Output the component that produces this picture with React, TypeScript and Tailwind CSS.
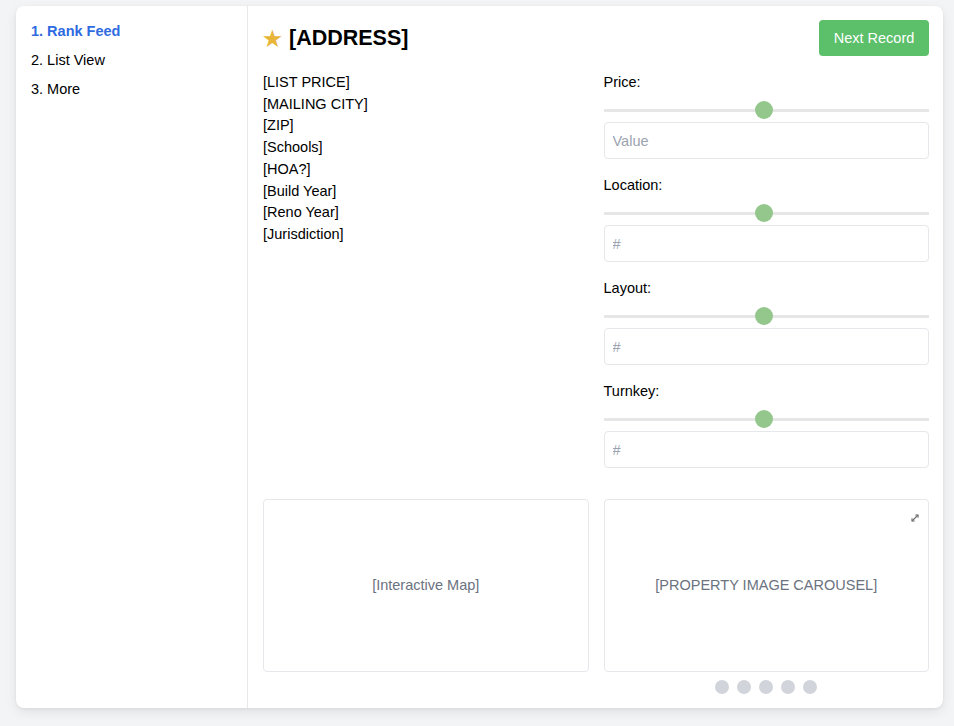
import { useState } from "react";

const FIELDS = ["[LIST PRICE]", "[MAILING CITY]", "[ZIP]", "[Schools]", "[HOA?]", "[Build Year]", "[Reno Year]", "[Jurisdiction]"];

const SCORES = [
  { label: "Price:", placeholder: "Value" },
  { label: "Location:", placeholder: "#" },
  { label: "Layout:", placeholder: "#" },
  { label: "Turnkey:", placeholder: "#" },
];

const NAV = ["1. Rank Feed", "2. List View", "3. More"];

export default function App() {
  const [active] = useState(0);

  return (
    <div
      className="min-h-screen bg-[#f3f4f6] pt-[6px] pb-[18px] pl-4 pr-[11px] text-[14.5px] text-black"
      style={{ fontFamily: '"Liberation Sans", Arial, sans-serif' }}
    >
      <div className="flex h-[702px] rounded-lg bg-white shadow-[0_4px_12px_rgba(0,0,0,0.08),0_1px_3px_rgba(0,0,0,0.06)]">
        {/* 侧边导航 */}
        <aside className="w-[232px] shrink-0 border-r border-[#e8e8e8] pl-[15px] pt-[10px]">
          <ul>
            {NAV.map((n, i) => (
              <li
                key={n}
                className={
                  i === active
                    ? "py-[4.5px] leading-5 font-bold text-[#2f6be0]"
                    : "py-[4.5px] leading-5"
                }
              >
                {n}
              </li>
            ))}
          </ul>
        </aside>

        <main className="flex-1 pl-[15px] pr-[14px] pt-[14px]">
          {/* 标题 + 按钮 */}
          <div className="flex h-9 items-center justify-between">
            <h1 className="flex items-center gap-[7px] pt-px text-[21.5px] font-bold">
              <span className="text-[21px] leading-none text-[#e8b43a]">★</span>
              [ADDRESS]
            </h1>
            <button className="h-9 w-[110px] rounded bg-[#5cbf6a] pt-px text-white">Next Record</button>
          </div>

          <div className="mt-[14px] grid grid-cols-2 gap-[15px]">
            <ul className="pt-[2px] leading-[21.7px]">
              {FIELDS.map((f) => (
                <li key={f}>{f}</li>
              ))}
            </ul>

            <div className="pt-[2px]">
              {SCORES.map((s, i) => (
                <div key={s.label} className={i > 0 ? "mt-4" : ""}>
                  <div className="leading-5">{s.label}</div>
                  <Slider />
                  <input
                    placeholder={s.placeholder}
                    className="mt-[2px] h-[37px] w-full rounded border border-[#e5e7eb] px-2 placeholder:text-[#9ca3af] focus:outline-none"
                  />
                </div>
              ))}
            </div>
          </div>

          {/* 地图 + 图片轮播 */}
          <div className="mt-[31px] grid grid-cols-2 gap-[15px]">
            <div className="grid h-[173px] place-items-center rounded border border-[#e5e7eb] text-[#6b7280]">
              [Interactive Map]
            </div>
            <div>
              <div className="relative grid h-[173px] place-items-center rounded border border-[#e5e7eb] text-[#6b7280]">
                [PROPERTY IMAGE CAROUSEL]
                <svg
                  className="absolute right-[9px] top-[14px]"
                  width="8"
                  height="8"
                  viewBox="0 0 8 8"
                  fill="none"
                  stroke="#6b6b6b"
                  strokeWidth="1.1"
                >
                  <path d="M1 7 L7 1" />
                  <path d="M4.3 1 H7 V3.7" />
                  <path d="M1 4.3 V7 H3.7" />
                </svg>
              </div>
              <div className="mt-2 flex justify-center gap-2">
                {[0, 1, 2, 3, 4].map((d) => (
                  <span key={d} className="h-[14px] w-[14px] rounded-full bg-[#d1d5db]" />
                ))}
              </div>
            </div>
          </div>
        </main>
      </div>
    </div>
  );
}

function Slider() {
  return (
    <div className="relative mt-2 flex h-5 items-center">
      <div className="h-[3px] w-full bg-[#e6e6e6]" />
      <div className="absolute left-[calc(50%-11px)] top-px h-[18px] w-[18px] rounded-full bg-[#93c78c]" />
    </div>
  );
}
